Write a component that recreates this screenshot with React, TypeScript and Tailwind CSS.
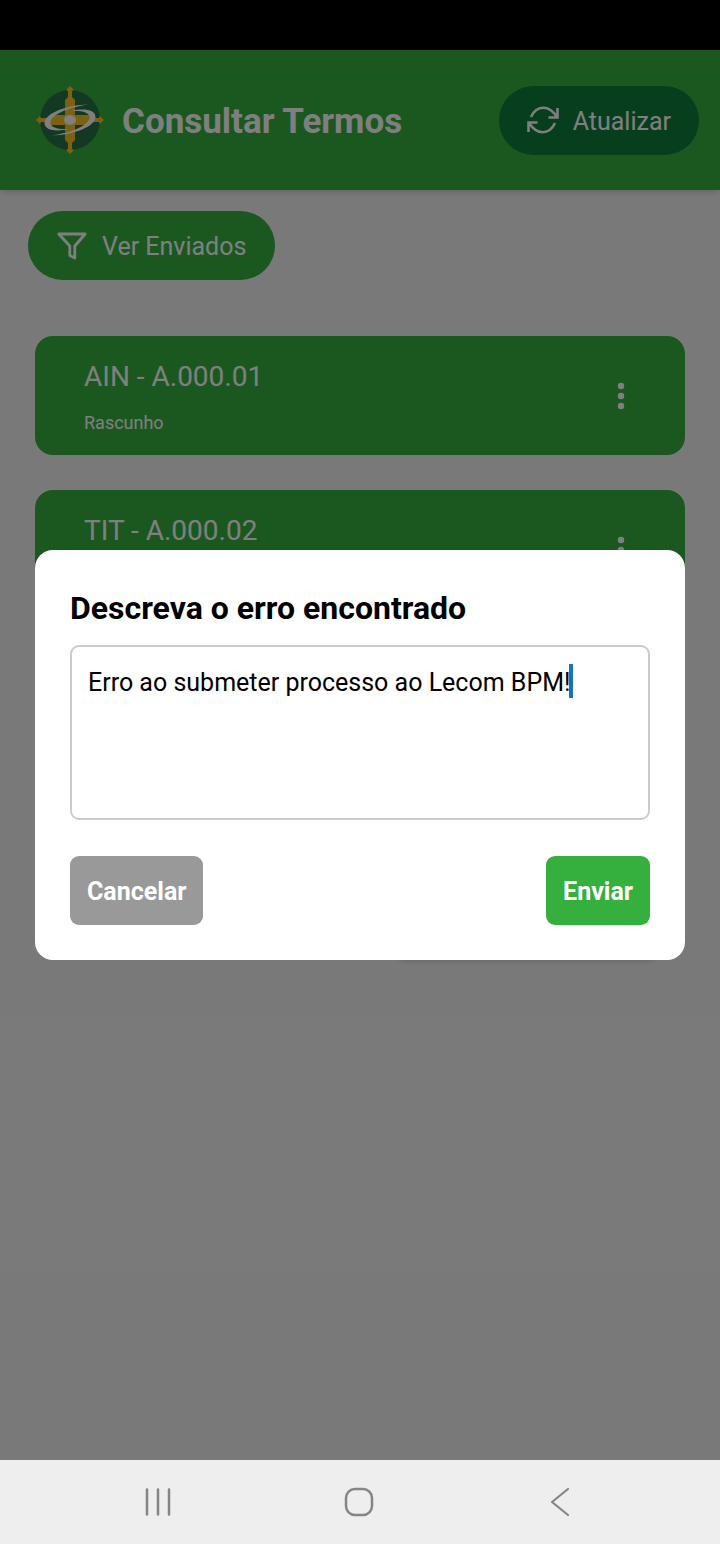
import React from "react";

const terms = [
  { id: 1, title: "AIN - A.000.01", status: "Rascunho", menuOpen: false },
  { id: 2, title: "TIT - A.000.02", status: "Rascunho", menuOpen: true },
];

function Logo() {
  return (
    <svg viewBox="0 0 70 70" className="size-[70px] shrink-0" aria-hidden="true">
      <circle cx="35" cy="35" r="30" fill="#267048" />
      <g fill="#fcc022">
        <path d="M35 1l4 4-2 1v6l3 3v40l-3 3v6l2 1-4 4-4-4 2-1v-6l-3-3V15l3-3V6l-2-1z" />
        <path d="M1 35l4-4 1 2h7l3-3h38l3 3h7l1-2 4 4-4 4-1-2h-7l-3 3H16l-3-3H6l-1 2z" />
      </g>
      <path
        d="M54 19.500C30 20 9.500 29 9.500 38c0 7.500 12 9 24 6-10 .5-18-1-18-6.500 0-7 16-15 38.500-18z"
        fill="#fff"
      />
      <path
        d="M16 50.500C40 50 60.500 41 60.500 32c0-7.500-12-9-24-6 10-.5 18 1 18 6.500 0 7-16 15-38.500 18z"
        fill="#fff"
      />
      <ellipse cx="35" cy="35" rx="6" ry="5" fill="#fff" />
    </svg>
  );
}

function RefreshIcon() {
  return (
    <svg viewBox="0 0 32 28" className="h-7 w-8" fill="none" stroke="currentColor" strokeWidth="2.600" aria-hidden="true">
      <path d="M4 11C7 4.500 11.500 1.800 16.500 1.800C22 1.800 26 5 30 11" />
      <path d="M30.500 2v9.500H21.500" />
      <path d="M28 17C25 23.500 20.500 26.200 15.500 26.200C10 26.200 6 23 2 17" />
      <path d="M1.500 26v-9.500H10.500" />
    </svg>
  );
}

function FilterIcon() {
  return (
    <svg viewBox="0 0 30 28" className="h-7 w-[30px]" fill="none" stroke="currentColor" strokeWidth="2.800" strokeLinejoin="round" aria-hidden="true">
      <path d="M1.800 2h26.400L17.800 14v12l-5-2.500V14z" />
    </svg>
  );
}

function TermCard({ title, status, menuOpen }: { title: string; status: string; menuOpen: boolean }) {
  return (
    <li className="relative flex items-center justify-between rounded-[18px] bg-[#35b03f] px-[49px] py-5 text-white">
      <div>
        <h2 className="pt-0.5 text-[28px] leading-[38px]">{title}</h2>
        <p className="mt-[15px] text-lg leading-6">{status}</p>
      </div>
      <button type="button" aria-label={`Opções de ${title}`} className="flex h-8 w-[30px] items-center justify-center">
        <svg viewBox="0 0 8 28" className="h-7 w-2" fill="currentColor" aria-hidden="true">
          <circle cx="4" cy="4" r="3.200" />
          <circle cx="4" cy="14" r="3.200" />
          <circle cx="4" cy="24" r="3.200" />
        </svg>
      </button>
      {menuOpen && <div className="absolute top-full right-7 h-[350px] w-[260px] rounded-lg bg-white shadow-md" />}
    </li>
  );
}

export default function App() {
  return (
    <div className="flex min-h-screen flex-col bg-[#f3f3f3] font-[Roboto,sans-serif]">
      <div className="h-[50px] bg-black" />
      <div className="relative flex grow flex-col">
        <header className="flex items-center bg-[#35b03f] py-[35px] pr-[21px] pl-[35px] text-white shadow-md">
          <Logo />
          <h1 className="ml-[17px] grow pt-1 text-[35px] leading-[46px] font-bold">Consultar Termos</h1>
          <button type="button" className="flex h-[69px] items-center gap-[14px] rounded-full bg-[#0e7c3c] px-7 text-[25px]">
            <RefreshIcon />
            <span className="pt-[3px]">Atualizar</span>
          </button>
        </header>
        <main className="grow">
          <button type="button" className="mt-[21px] ml-7 flex h-[69px] items-center gap-[15px] rounded-full bg-[#35b03f] px-[29px] text-[25px] text-white">
            <FilterIcon />
            <span className="pt-[3px]">Ver Enviados</span>
          </button>
          <ul className="mt-14 flex flex-col gap-[35px] px-[35px]">
            {terms.map((term) => (
              <TermCard key={term.id} title={term.title} status={term.status} menuOpen={term.menuOpen} />
            ))}
          </ul>
        </main>
        <div className="absolute inset-0 flex items-center justify-center bg-black/50 px-[35px]">
          <form
            role="dialog"
            aria-labelledby="error-title"
            className="w-full rounded-[18px] bg-white p-[35px] text-black"
            onSubmit={(event) => event.preventDefault()}
          >
            <label id="error-title" htmlFor="error-text" className="block text-[32px] leading-[46px] font-bold">
              Descreva o erro encontrado
            </label>
            <div className="relative mt-[14px] h-[175px]">
              <textarea
                id="error-text"
                defaultValue="Erro ao submeter processo ao Lecom BPM!"
                className="block size-full resize-none rounded-[9px] border-2 border-[#ccc] px-4 py-[21px] text-[25px] leading-[30px] outline-none"
              />
              <span className="absolute top-[19px] left-[499px] h-[34px] w-1 bg-[#1a73b8]" />
            </div>
            <div className="mt-9 flex justify-between text-[25px] font-bold text-white">
              <button type="button" className="h-[69px] rounded-[9px] bg-[#999] px-[17px] pt-0.5">
                Cancelar
              </button>
              <button type="submit" className="h-[69px] rounded-[9px] bg-[#35b03f] px-[17px] pt-0.5">
                Enviar
              </button>
            </div>
          </form>
        </div>
      </div>
      <nav aria-label="Sistema" className="grid h-[84px] grid-cols-3 place-items-center bg-[#eee] pr-[60px] pl-[57px] text-[#858585]">
        <button type="button" aria-label="Recentes">
          <svg viewBox="0 0 28 30" className="h-[30px] w-7" fill="none" stroke="currentColor" strokeWidth="2.500" strokeLinecap="round" aria-hidden="true">
            <path d="M3 2.500v25M14 2.500v25M25 2.500v25" />
          </svg>
        </button>
        <button type="button" aria-label="Início">
          <svg viewBox="0 0 30 30" className="size-[30px]" fill="none" stroke="currentColor" strokeWidth="2.500" aria-hidden="true">
            <rect x="2" y="2" width="26" height="26" rx="9" />
          </svg>
        </button>
        <button type="button" aria-label="Voltar">
          <svg viewBox="0 0 20 30" className="h-[30px] w-5" fill="none" stroke="currentColor" strokeWidth="2.200" strokeLinecap="round" strokeLinejoin="round" aria-hidden="true">
            <path d="M18 2L2 15l16 13" />
          </svg>
        </button>
      </nav>
    </div>
  );
}
